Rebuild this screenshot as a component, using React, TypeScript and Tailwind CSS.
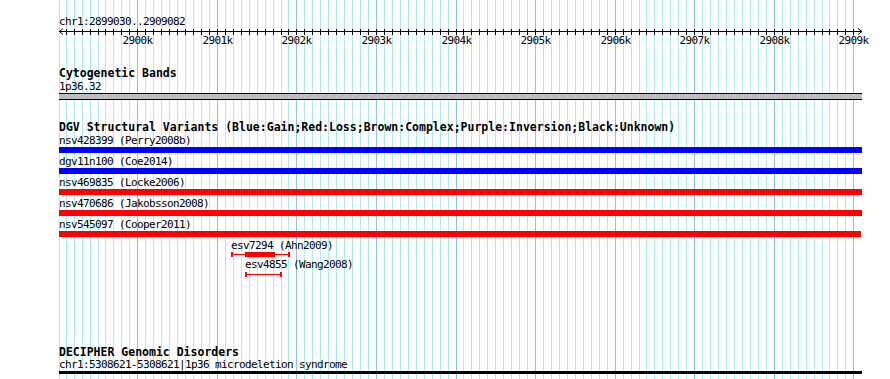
import type { ReactNode } from "react";

// Genomic scale: x pixel = 137.3 + (bp - 2900000) * 0.07956
const toX = (bp: number) => Math.round(137.3 + (bp - 2900000) * 0.07956);

const MINOR = Array.from({ length: 100 }, (_, i) => 2899100 + i * 100);
const MAJOR = Array.from({ length: 10 }, (_, i) => 2900000 + i * 1000);

const variants = [
  { id: "nsv428399", label: "nsv428399 (Perry2008b)", bar: "bg-[#0000ff] w-[803px]" },
  { id: "dgv11n100", label: "dgv11n100 (Coe2014)", bar: "bg-[#0000ff] w-[803px]" },
  { id: "nsv469835", label: "nsv469835 (Locke2006)", bar: "bg-[#ff0000] w-[803px]" },
  { id: "nsv470686", label: "nsv470686 (Jakobsson2008)", bar: "bg-[#ff0000] w-[803px]" },
  { id: "nsv545097", label: "nsv545097 (Cooper2011)", bar: "bg-[#ff0000] w-[802px]" },
];

/**
 * Background grid: pale lines every 100bp, stronger every 1kb.
 */
function GridLines() {
  return (
    <svg
      aria-hidden="true"
      className="pointer-events-none absolute inset-0"
      width={890}
      height={379}
      shapeRendering="crispEdges"
    >
      <line x1={59.5} x2={59.5} y1={0} y2={379} stroke="#afeeee" />
      {MINOR.map((bp) => {
        const x = toX(bp) + 0.5;
        const isMajor = bp % 1000 === 0;
        return (
          <line
            key={bp}
            x1={x}
            x2={x}
            y1={0}
            y2={379}
            stroke={isMajor ? "#87c6ea" : "#afeeee"}
          />
        );
      })}
    </svg>
  );
}

/**
 * Position ruler with arrowheads, ticks and kb labels.
 */
function Ruler() {
  const off = 59;
  return (
    <svg width={812} height={19} className="block overflow-visible" shapeRendering="crispEdges">
      <line x1={0} x2={803} y1={3.5} y2={3.5} stroke="#000" />
      <polyline points="4,0.5 0.5,3.5 4,6.5" fill="none" stroke="#000" shapeRendering="auto" />
      <polyline points="799,0.5 803,3.5 799,6.5" fill="none" stroke="#000" shapeRendering="auto" />
      {MINOR.map((bp) => {
        const x = toX(bp) - off + 0.5;
        return <line key={bp} x1={x} x2={x} y1={1} y2={7} stroke="#000" />;
      })}
      {MAJOR.map((bp) => (
        <text
          key={bp}
          x={toX(bp) - off + 0.5}
          y={16}
          textAnchor="middle"
          fontSize={11}
          letterSpacing={-0.62}
          fontFamily="'DejaVu Sans Mono', monospace"
          fill="#000"
        >
          {`${Math.round(bp / 1000)}k`}
        </text>
      ))}
    </svg>
  );
}

function TrackTitle({ children, className = "" }: { children: ReactNode; className?: string }) {
  return <p className={`text-[11.5px] leading-[13px] font-bold whitespace-nowrap ${className}`}>{children}</p>;
}

function Label({ children, className = "" }: { children: ReactNode; className?: string }) {
  return (
    <p className={`text-[11px] leading-[13px] tracking-[-0.62px] whitespace-nowrap ${className}`}>{children}</p>
  );
}

export default function App() {
  return (
    <div className="relative h-[379px] w-[890px] overflow-hidden bg-white font-['DejaVu_Sans_Mono',monospace] text-black">
      <GridLines />

      <div className="relative flex flex-col pt-[15px] pl-[59px]">
        <Label>chr1:2899030..2909082</Label>
        <Ruler />

        <TrackTitle className="mt-[20px]">Cytogenetic Bands</TrackTitle>
        <Label>1p36.32</Label>
        <div className="h-[7px] w-[803px] border-y border-black bg-[#bfbcbf]" />

        <TrackTitle className="mt-[21px]">
          DGV Structural Variants (Blue:Gain;Red:Loss;Brown:Complex;Purple:Inversion;Black:Unknown)
        </TrackTitle>
        <ol className="flex flex-col gap-[2px]">
          {variants.map((v) => (
            <li key={v.id}>
              <Label>{v.label}</Label>
              <div className={`h-[6px] ${v.bar}`} />
            </li>
          ))}
        </ol>

        <Label className="mt-[2px] ml-[172px]">esv7294 (Ahn2009)</Label>
        <svg width={60} height={5} className="ml-[172px] block" shapeRendering="crispEdges">
          <rect x={0} y={0} width={2} height={5} fill="#ff0000" />
          <rect x={0} y={2} width={59} height={1} fill="#ff0000" />
          <rect x={14} y={0} width={30} height={5} fill="#ff0000" />
          <rect x={57} y={0} width={2} height={5} fill="#ff0000" />
        </svg>

        <Label className="mt-[1px] ml-[186px]">esv4855 (Wang2008)</Label>
        <svg width={38} height={7} className="ml-[186px] block" shapeRendering="crispEdges">
          <rect x={0} y={1} width={2} height={5} fill="#ff0000" />
          <rect x={0} y={3} width={37} height={1} fill="#ff0000" />
          <rect x={35} y={1} width={2} height={5} fill="#ff0000" />
        </svg>

        <p className="mt-[68px] text-[11.5px] leading-[12px] font-bold whitespace-nowrap">
          DECIPHER Genomic Disorders
        </p>
        <Label>chr1:5308621-5308621|1p36 microdeletion syndrome</Label>
        <div className="h-[3px] w-[803px] bg-black" />
      </div>
    </div>
  );
}
